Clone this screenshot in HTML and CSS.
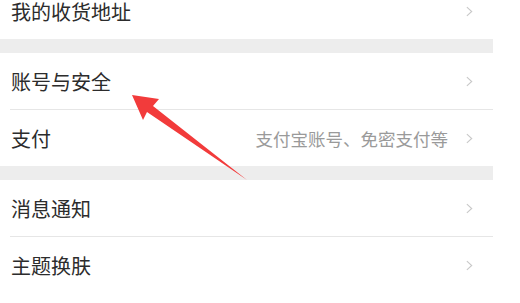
FILE: index.html
```html
<!DOCTYPE html>
<html lang="zh">
<head>
<meta charset="utf-8">
<link rel="stylesheet" href="styles.css">
</head>
<body>
<div class="page">
  <div class="list">
    <div class="group first">
      <div class="row"><span class="label">我的收货地址</span><span class="right"><svg class="chev" viewBox="0 0 8 12"><polyline points="1,1 6.5,6 1,11"/></svg></span></div>
    </div>
    <div class="gap"></div>
    <div class="group">
      <div class="row line"><span class="label">账号与安全</span><span class="right"><svg class="chev" viewBox="0 0 8 12"><polyline points="1,1 6.5,6 1,11"/></svg></span></div>
      <div class="row"><span class="label">支付</span><span class="right"><span class="hint">支付宝账号、免密支付等</span><svg class="chev" viewBox="0 0 8 12"><polyline points="1,1 6.5,6 1,11"/></svg></span></div>
    </div>
    <div class="gap"></div>
    <div class="group">
      <div class="row line"><span class="label">消息通知</span><span class="right"><svg class="chev" viewBox="0 0 8 12"><polyline points="1,1 6.5,6 1,11"/></svg></span></div>
      <div class="row"><span class="label">主题换肤</span><span class="right"><svg class="chev" viewBox="0 0 8 12"><polyline points="1,1 6.5,6 1,11"/></svg></span></div>
    </div>
  </div>
  <svg class="arrow" viewBox="0 0 520 303" width="520" height="303">
    <polygon points="132,95 159,99 153,106 247,180 147,112 143,120"/>
  </svg>
</div>
</body>
</html>
```
FILE: styles.css
```css
html, body {
  margin: 0;
  padding: 0;
  background: #ffffff;
}
.page {
  position: relative;
  width: 520px;
  height: 303px;
  overflow: hidden;
  font-family: "Noto Sans CJK SC", "Noto Sans", sans-serif;
}
.list {
  width: 493px;
  margin-top: -16px;
  display: flex;
  flex-direction: column;
}
.first .row {
  height: 55px;
}
.gap {
  height: 14px;
  background: #ededed;
}
.group {
  display: flex;
  flex-direction: column;
  padding-left: 10px;
  background: #fff;
}
.row {
  height: 56px;
  display: flex;
  align-items: center;
  justify-content: space-between;
  padding-right: 20px;
}
.row.line {
  border-bottom: 1px solid #e6e6e6;
}
.label {
  font-size: 20px;
  font-weight: 400;
  color: #2c2c2c;
  padding-left: 1px;
}
.right {
  display: flex;
  align-items: center;
  gap: 18px;
}
.hint {
  font-size: 17.5px;
  color: #9a9a9a;
}
.chev {
  width: 7px;
  height: 11px;
}
.chev polyline {
  fill: none;
  stroke: #c8c8c8;
  stroke-width: 1.3;
}
.arrow {
  position: absolute;
  left: 0;
  top: 0;
}
.arrow polygon {
  fill: #f23b3b;
}
```
